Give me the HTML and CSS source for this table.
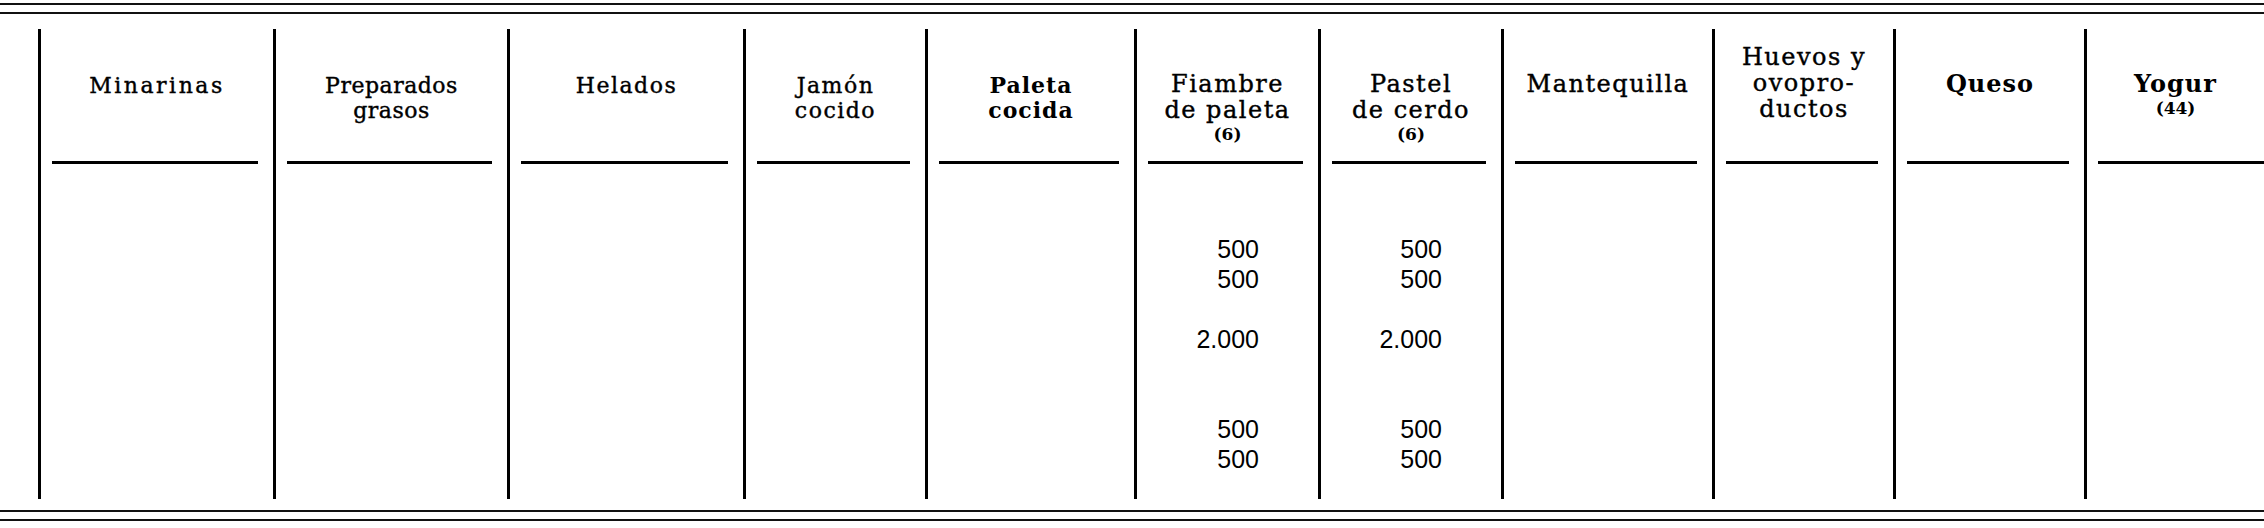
FILE: index.html
```html
<!DOCTYPE html>
<html lang="es">
<head>
<meta charset="utf-8">
<title>Tabla</title>
<link rel="stylesheet" href="styles.css">
</head>
<body>
<div class="page">
  <div class="rule-double"></div>
  <div class="table">
    <div class="col">
      <div class="head h-min h-wide"><div>Minarinas</div></div>
      <div class="uline"></div>
      <div class="cells"></div>
    </div>
    <div class="col">
      <div class="head h-min h-tight"><div>Preparados</div><div>grasos</div></div>
      <div class="uline"></div>
      <div class="cells"></div>
    </div>
    <div class="col">
      <div class="head h-slab"><div>Helados</div></div>
      <div class="uline"></div>
      <div class="cells"></div>
    </div>
    <div class="col">
      <div class="head h-slab"><div>Jamón</div><div>cocido</div></div>
      <div class="uline"></div>
      <div class="cells"></div>
    </div>
    <div class="col">
      <div class="head h-slab h-bold"><div>Paleta</div><div>cocida</div></div>
      <div class="uline"></div>
      <div class="cells"></div>
    </div>
    <div class="col">
      <div class="head h-slab h-big"><div>Fiambre</div><div>de paleta</div><div class="note">(6)</div></div>
      <div class="uline"></div>
      <div class="cells">
        <div class="num">500</div>
        <div class="num">500</div>
        <div class="num"></div>
        <div class="num">2.000</div>
        <div class="num"></div>
        <div class="num"></div>
        <div class="num">500</div>
        <div class="num">500</div>
      </div>
    </div>
    <div class="col">
      <div class="head h-slab h-big"><div>Pastel</div><div>de cerdo</div><div class="note">(6)</div></div>
      <div class="uline"></div>
      <div class="cells">
        <div class="num">500</div>
        <div class="num">500</div>
        <div class="num"></div>
        <div class="num">2.000</div>
        <div class="num"></div>
        <div class="num"></div>
        <div class="num">500</div>
        <div class="num">500</div>
      </div>
    </div>
    <div class="col">
      <div class="head h-slab h-big"><div>Mantequilla</div></div>
      <div class="uline"></div>
      <div class="cells"></div>
    </div>
    <div class="col">
      <div class="head h-slab h-big h-high"><div>Huevos y</div><div>ovopro-</div><div>ductos</div></div>
      <div class="uline"></div>
      <div class="cells"></div>
    </div>
    <div class="col">
      <div class="head h-slab h-big h-bold"><div>Queso</div></div>
      <div class="uline"></div>
      <div class="cells"></div>
    </div>
    <div class="col col-last">
      <div class="head h-slab h-big h-bold"><div>Yogur</div><div class="note">(44)</div></div>
      <div class="uline"></div>
      <div class="cells"></div>
    </div>
  </div>
  <div class="rule-double rule-bottom"></div>
</div>
</body>
</html>
```

FILE: styles.css
```css
html, body {
  margin: 0;
  padding: 0;
  background: #ffffff;
}

body {
  width: 2264px;
  height: 528px;
  overflow: hidden;
  color: #000000;
  font-family: "DejaVu Serif", "Liberation Serif", serif;
}

.page {
  width: 2264px;
}

.rule-double {
  margin-top: 3px;
  height: 7px;
  border-top: 2px solid #111;
  border-bottom: 2px solid #111;
}

.rule-bottom {
  margin-top: 11px;
}

.table {
  display: grid;
  grid-template-columns: 235px 234px 236px 182px 209px 184px 183px 211px 181px 191px 180px;
  padding-left: 38px;
  margin-top: 15px;
  height: 470px;
}

.col {
  border-left: 3px solid #000;
  display: flex;
  flex-direction: column;
}

.head {
  height: 132px;
  box-sizing: border-box;
  padding-top: 44px;
  text-align: center;
  font-size: 22px;
  line-height: 25px;
  -webkit-text-stroke: 0.4px #000;
}

.h-min {
  font-family: "DejaVu Serif", serif;
  letter-spacing: 1.5px;
  font-size: 22px;
}

.h-wide {
  letter-spacing: 2.5px;
}

.h-tight {
  letter-spacing: 0.5px;
}

.h-slab {
  font-family: "DejaVu Serif", serif;
  letter-spacing: 1.5px;
  font-size: 22px;
  padding-top: 44px;
}

.h-big {
  font-size: 24px;
  line-height: 26px;
  padding-top: 42px;
}

.h-high {
  padding-top: 15px;
}

.h-bold {
  font-weight: bold;
  letter-spacing: 1px;
  -webkit-text-stroke: 0;
}

.note {
  font-size: 17px;
  line-height: 22px;
  font-weight: bold;
  letter-spacing: 0;
  -webkit-text-stroke: 0;
}

.uline {
  height: 3px;
  background: #000;
  margin: 0 15px 0 11px;
}

.col-last .uline {
  margin-right: 0;
}

.cells {
  flex: 1;
  padding-top: 70px;
  padding-right: 59px;
  text-align: right;
  font-family: "Liberation Sans", Arial, sans-serif;
  font-size: 25px;
  line-height: 30px;
}

.num {
  height: 30px;
}
```
